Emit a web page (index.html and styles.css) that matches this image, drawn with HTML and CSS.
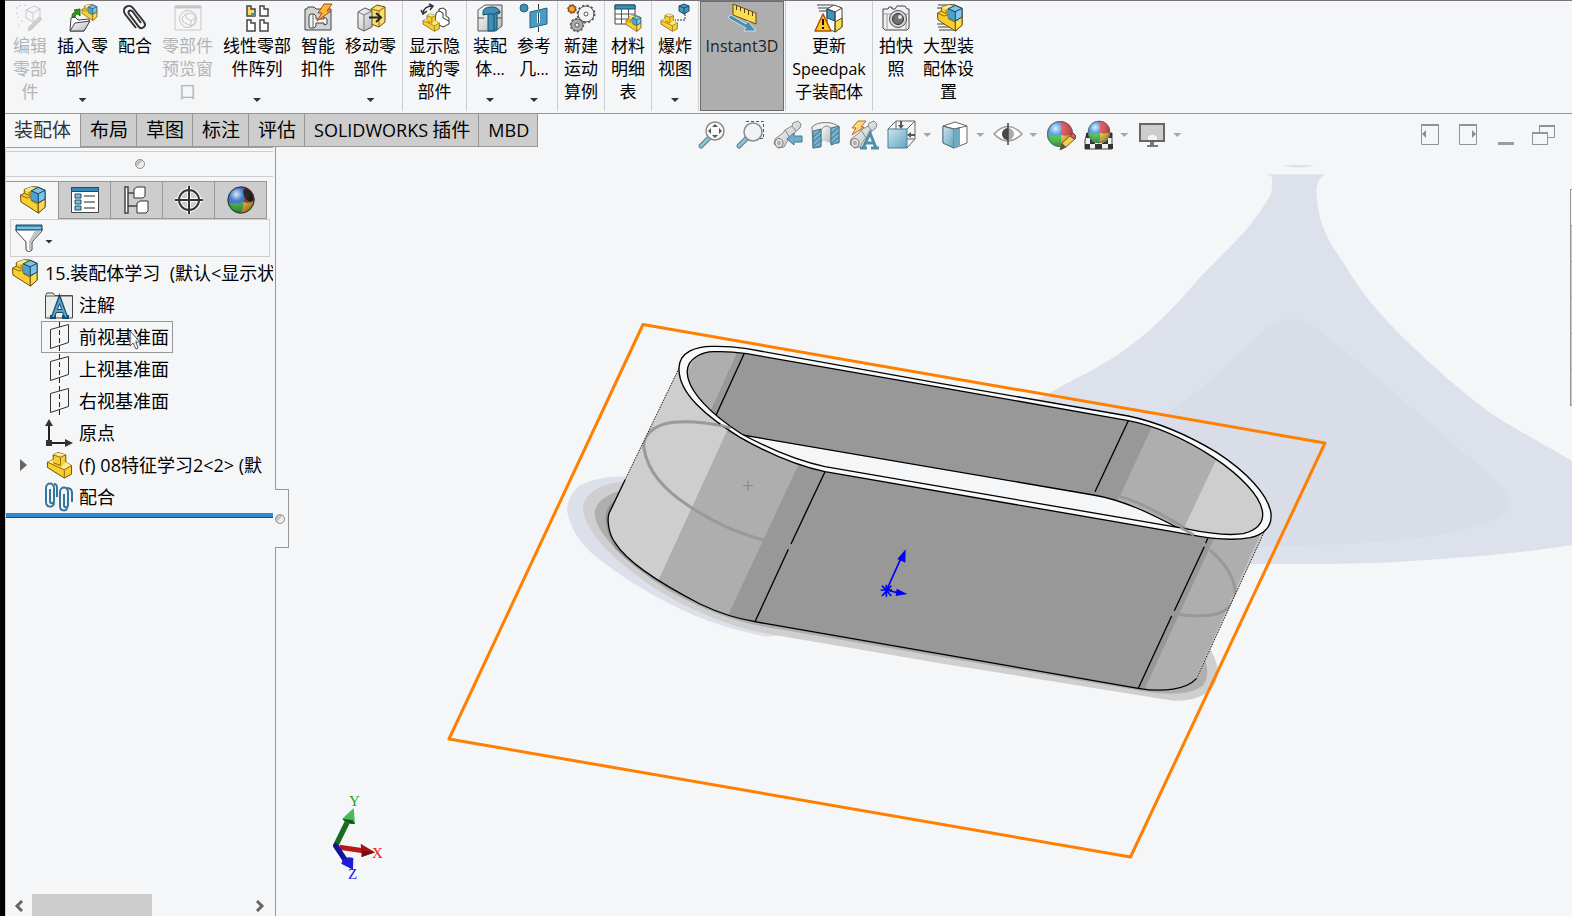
FILE: index.html
```html
<!DOCTYPE html>
<html lang="zh-CN">
<head>
<meta charset="utf-8">
<title>SOLIDWORKS - 15.装配体学习</title>
<link rel="stylesheet" href="styles.css">
</head>
<body>
<svg class="defs" aria-hidden="true">
  <defs>
    <linearGradient id="blueFace" x1="0" y1="0" x2="1" y2="1"><stop offset="0" stop-color="#cfe6f0"/><stop offset="1" stop-color="#5fa3bf"/></linearGradient>
    <linearGradient id="steel" x1="0" y1="0" x2="1" y2="1"><stop offset="0" stop-color="#ffffff"/><stop offset="1" stop-color="#b4b6b8"/></linearGradient>
    <radialGradient id="shine" cx=".32" cy=".28" r=".75"><stop offset="0" stop-color="#fff" stop-opacity=".85"/><stop offset=".35" stop-color="#fff" stop-opacity=".15"/><stop offset="1" stop-color="#000" stop-opacity=".3"/></radialGradient>
    <symbol id="asm" viewBox="0 0 28 29">
      <path d="M1 9.500 5 7.500V3.500L13 .8 19 1 26.500 4.500V22L19.500 28 1.500 16.500z" fill="#f7cf2e" stroke="#6b4a08"/>
      <path d="M5 3.500 13 .8 18 2.500 10 6z" fill="#fbe88a"/><path d="M1 9.500 8 12.500 12 11M5 7.500 10 10V6M12 15 19.500 19V28" fill="none" stroke="#8a6410"/>
      <path d="M19.500 18V28L26.500 22V13z" fill="#fbdc55" stroke="#6b4a08"/>
      <path d="M12 5 19.500 1.500 26.500 4.500V13.500L19.500 17.500 12 14z" fill="#7cc4ea" stroke="#123f5c"/><path d="M12 5 19.500 8V17.500L12 14z" fill="#4e9fcb"/><path d="M12 5 19.500 8 26.500 4.500M19.500 8V17.500" fill="none" stroke="#123f5c"/>
    </symbol>
    <symbol id="part" viewBox="0 0 28 29">
      <path d="M1 11.500 7 9V4L12 1.500 20 4V11.500L26 15V24L18.500 28 1 17z" fill="#f7cf2e" stroke="#6b4a08"/>
      <path d="M7 4 12 1.500 20 4 14.500 6.500zM1 11.500 7 9V14L14.500 17 20 11.500 26 15 18.500 19.500z" fill="#fbea8c"/><path d="M7 4 14.500 6.500 20 4M14.500 6.500V15L7 12M1 11.500 18.500 19.500 26 15M18.500 19.500V28" fill="none" stroke="#8a6410"/>
    </symbol>
    <symbol id="plane" viewBox="0 0 28 32">
      <path d="M5.500 8.500 23.500 3.500V21.500L5.500 27.500z" fill="none" stroke="#333"/><path d="M14.500 1V32" stroke="#222" stroke-dasharray="5 3"/>
    </symbol>
    <symbol id="lens" viewBox="0 0 30 30">
      <path d="M13 17 4 26" stroke="#557c8c" stroke-width="5" stroke-linecap="round"/><path d="M12 18 4 26" stroke="#8fc4da" stroke-width="3" stroke-linecap="round"/>
    </symbol>
    <symbol id="scope" viewBox="0 0 30 30">
      <path d="M2 19 10 13 12 10 19 6 20 3 25 1 28 4 27 8 22 12 20 16 15 20 11 27 5 28 1 24z" fill="url(#steel)" stroke="#8a8a8a"/><ellipse cx="6" cy="23" rx="4" ry="4.500" fill="#e8e8e8" stroke="#777"/><ellipse cx="6" cy="23" rx="2" ry="2.500" fill="#b0b0b0"/><path d="M12 10 17 18M19 6 23 11" stroke="#8a8a8a"/>
    </symbol>
    <symbol id="ball" viewBox="0 0 28 28">
      <circle cx="14" cy="14" r="13" fill="#3f8fe0"/><path d="M14 1A13 13 0 0 1 27 14Q20 17 15 15Q16 7 14 1z" fill="#e04545"/><path d="M1 14Q8 17 15 15Q16 21 14 27A13 13 0 0 1 1 14z" fill="#3fbf45"/><path d="M27 14Q20 17 15 15Q16 21 14 27A13 13 0 0 0 27 14z" fill="#ecc63c"/><circle cx="14" cy="14" r="12.500" fill="url(#shine)" stroke="#5a6670"/>
    </symbol>
  </defs>
</svg>

<div class="app">
  <header class="ribbon">
    <button class="cmd" disabled><svg class="ico" viewBox="0 0 28 28"><g fill="none" stroke="#c9c9c9"><path d="M10 6 18 2 24 5V14L17 18 10 14zM10 6 17 9 24 5M17 9V18"/><path d="M1 3V12L7 18M2 22 6 20M3 2 10 1" stroke-dasharray="2 3"/><path d="M26 15 16 25 12 27 13 23 23 13z" fill="#cfcfcf"/></g></svg><span class="lbl">编辑<br>零部<br>件</span></button>
    <button class="cmd"><svg class="ico" viewBox="0 0 28 28"><use href="#asm" x="12" y="0" width="17" height="17"/><path d="M1 27 2 14 6 13 9 16 20 15 20 18 15 27z" fill="#fff" stroke="#444"/><path d="M1 27 6 19 21 17 15 27z" fill="url(#steel)" stroke="#444"/><path d="M3 13C3 9 5 8 7 8L5 6 11 5V12L9 10C7 10 6 11 6 13z" fill="#2f9a1c" stroke="#1d6b10"/></svg><span class="lbl">插入零<br>部件</span><i class="drop"></i></button>
    <button class="cmd"><svg class="ico" viewBox="0 0 28 28"><path d="M8 10 18 23C21 26 26 22 23 18L12 4C8 -1 0 4 4 10L15 24M8 10C6 7 10 5 12 8L20 19" fill="none" stroke="#333" stroke-width="2"/></svg><span class="lbl">配合</span></button>
    <button class="cmd" disabled><svg class="ico" viewBox="0 0 28 28"><g fill="none" stroke="#c6c6c6"><path d="M1 2H27V26H1z"/><path d="M1 3H27" stroke-width="3"/><circle cx="14" cy="15" r="8.500"/><path d="M8 14 12 10 18 9 21 12V19L17 22 9 18zM12 10V14L17 17 21 14M17 17V22"/></g></svg><span class="lbl">零部件<br>预览窗<br>口</span></button>
    <button class="cmd"><svg class="ico" viewBox="0 0 28 28"><g fill="#fff" stroke="#444" stroke-width="1.500"><path d="M4 2H8V5H12V12H4z" fill="#f9dc62"/><path d="M17 2H21V5H25V12H17zM4 16H8V19H12V27H4zM17 16H21V19H25V27H17z"/></g><path d="M8 9H12V12H8z" fill="#3b93bd"/></svg><span class="lbl">线性零部<br>件阵列</span><i class="drop"></i></button>
    <button class="cmd"><svg class="ico" viewBox="0 0 28 28"><path d="M1 26V5H3L4 3H10L12 5H27V26z" fill="#d2d3d5" stroke="#444"/><path d="M6 10H10L12 12V15H20V13L23 15V20L20 21V19H12V22L10 24H6L5 22V12z" fill="#f4f4f4" stroke="#444"/><path d="M9 10V24" stroke="#666"/><path d="M20 0H28L23 7H27L13 17 18 9H14z" fill="#fbb73b" stroke="#a34b12"/></svg><span class="lbl">智能<br>扣件</span></button>
    <button class="cmd"><svg class="ico" viewBox="0 0 28 28"><path d="M14 5 20 1 28 3V18L22 23 14 20z" fill="#fadf65" stroke="#6b4a08"/><path d="M14 5 22 7 28 3M22 7V23" fill="none" stroke="#8a6410"/><path d="M1 8 8 4 15 7V23L7 27 1 24z" fill="url(#steel)" stroke="#555"/><path d="M1 8 7 11 15 7M7 11V27" fill="none" stroke="#777"/><path d="M12 13.500H22M19 9 24 13.500 19 18" fill="none" stroke="#222" stroke-width="2"/></svg><span class="lbl">移动零<br>部件</span><i class="drop"></i></button>
    <span class="sep"></span>
    <button class="cmd"><svg class="ico" viewBox="0 0 28 28"><path d="M15 9 18 7V5L22 4 25 6V12L28 14V20L22 23 14 19z" fill="#fff" stroke="#333"/><path d="M18 7 22 9V14L28 17" fill="none" stroke="#333"/><use href="#part" x="1" y="9" width="19" height="19"/><path d="M2 9C3 4 7 2 11 2M8 0 12 2 9 6M0 6 2 10 6 7" fill="none" stroke="#333" stroke-width="1.500"/></svg><span class="lbl">显示隐<br>藏的零<br>部件</span></button>
    <span class="sep"></span>
    <button class="cmd"><svg class="ico" viewBox="0 0 28 28"><path d="M2 6 9 1H26V22L20 27H2z" fill="url(#steel)" stroke="#555"/><path d="M2 14H8M20 14H26" stroke="#555"/><path d="M7 8C7 4 12 3 16 3S24 5 24 9L21 10V25L17 27H12V10L7 11z" fill="#3f8eb4" stroke="#174d69"/><path d="M12 10H18V27M18 10 24 7" fill="none" stroke="#174d69"/></svg><span class="lbl">装配<br>体<span class="lat">...</span></span><i class="drop"></i></button>
    <button class="cmd"><svg class="ico" viewBox="0 0 28 28"><circle cx="4" cy="4" r="4" fill="#3f8eb4" stroke="#245f7e"/><path d="M10 8 27 4V20L10 24z" fill="#4a9cc4" stroke="#245f7e"/><path d="M18.500 0V5M18.500 23V28" stroke="#333"/><path d="M18.500 9V19" stroke="#fff" stroke-width="3"/><path d="M18.500 9V19" stroke="#333"/></svg><span class="lbl">参考<br>几<span class="lat">...</span></span><i class="drop"></i></button>
    <span class="sep"></span>
    <button class="cmd"><svg class="ico" viewBox="0 0 28 28"><circle cx="5" cy="5" r="3.500" fill="#f5a83a" stroke="#8a4c0c" stroke-width="1.500"/><circle cx="5" cy="5" r="4.500" fill="none" stroke="#8a4c0c" stroke-dasharray="1.500 2"/><circle cx="19" cy="10" r="8" fill="#f4f4f4" stroke="#555"/><circle cx="19" cy="10" r="8.500" fill="none" stroke="#555" stroke-width="2" stroke-dasharray="2 2.500"/><circle cx="19" cy="10" r="2" fill="#fff" stroke="#555"/><circle cx="10" cy="21" r="6" fill="#a9abad" stroke="#555"/><circle cx="10" cy="21" r="6.500" fill="none" stroke="#666" stroke-width="1.500" stroke-dasharray="2 2"/><circle cx="10" cy="21" r="2" fill="#fff" stroke="#555"/></svg><span class="lbl">新建<br>运动<br>算例</span></button>
    <span class="sep"></span>
    <button class="cmd"><svg class="ico" viewBox="0 0 28 28"><path d="M1 1H21V20H1z" fill="#fff" stroke="#444"/><path d="M1 1H21V5H1z" fill="#3b8fba" stroke="#174d69"/><path d="M1 10H21M1 15H21M7.500 5V20M14.500 5V20" stroke="#555"/><use href="#asm" x="11" y="11" width="17" height="17"/></svg><span class="lbl">材料<br>明细<br>表</span></button>
    <span class="sep"></span>
    <button class="cmd"><svg class="ico" viewBox="0 0 28 28"><use href="#part" x="-1" y="9" width="19" height="19"/><path d="M18 2 23 0 28 2V7L23 10 18 7z" fill="#4597c0" stroke="#174d69"/><path d="M18 2 23 4 28 2M23 4V10" fill="none" stroke="#174d69"/><path d="M24 10V16H14" fill="none" stroke="#333" stroke-dasharray="2 1"/></svg><span class="lbl">爆炸<br>视图</span><i class="drop"></i></button>
    <span class="sep"></span>
    <button class="cmd wide on" aria-pressed="true"><svg class="ico" viewBox="0 0 28 28"><path d="M5 0 28 9V20L5 11z" fill="#f9dd50" stroke="#6b4a08"/><path d="M8.500 1V6M12.500 3V7M16.500 5V9M20.500 6V11M24.500 8V12" stroke="#5a430a"/><path d="M0 13 3 11 18 20 20 17 28 27 16 27 18 24 2 15z" fill="#4b8fae" stroke="#d9edf5" stroke-width=".8"/></svg><span class="lbl"><span class="lat">Instant3D</span></span></button>
    <span class="sep"></span>
    <button class="cmd wide"><svg class="ico" viewBox="0 0 28 28"><path d="M2 1H18M3 4H14M4 7H12" stroke="#444"/><path d="M12 5 19 1 27 4V23L20 28 12 24z" fill="#fff" stroke="#444"/><path d="M12 5 20 8V17L12 14z" fill="#3f94bf" stroke="#174d69"/><path d="M20 18 27 14V23L20 28z" fill="#f9dd50" stroke="#6b4a08"/><path d="M12 5 20 8 27 4M20 8V28" fill="none" stroke="#444"/><path d="M8 10 16 27H0z" fill="#fcc822" stroke="#b0500c" stroke-width="1.500" stroke-linejoin="round"/><path d="M8 15V21M8 23V25" stroke="#111" stroke-width="2"/></svg><span class="lbl">更新<br><span class="lat">Speedpak</span><br>子装配体</span></button>
    <span class="sep"></span>
    <button class="cmd"><svg class="ico" viewBox="0 0 28 28"><path d="M1 5H6L7 3H10V5H13L15 2H23L25 5H27V24L25 26H3L1 24z" fill="#f0f1f2" stroke="#444"/><path d="M1 10H27M5 10V26M24 10V26" stroke="#999"/><circle cx="16" cy="15" r="8.500" fill="#d5d6d8" stroke="#555"/><circle cx="16" cy="15" r="5.500" fill="#6e7275" stroke="#333"/><circle cx="18" cy="13" r="2" fill="#e6e6e6"/></svg><span class="lbl">拍快<br>照</span></button>
    <button class="cmd"><svg class="ico" viewBox="0 0 28 28"><path d="M3 1H20M2 4H14M2 20H14M3 23H16M4 26H20" stroke="#444"/><use href="#asm" x="1" y="0" width="28" height="28"/></svg><span class="lbl">大型装<br>配体设<br>置</span></button>
  </header>

  <div class="strip">
    <nav class="tabs">
      <button class="tab on">装配体</button><button class="tab">布局</button><button class="tab">草图</button><button class="tab">标注</button><button class="tab">评估</button><button class="tab"><span class="lat">SOLIDWORKS</span> 插件</button><button class="tab"><span class="lat">MBD</span></button>
    </nav>
    <div class="hud">
      <button class="view" aria-label="整屏显示全图"><svg viewBox="0 0 30 30"><use href="#lens"/><circle cx="18" cy="11" r="9" fill="#f8fafc" stroke="#8b8b8b" stroke-width="1.500"/><path d="M18 4 21 7H15zM18 18 15 15H21zM11 11 14 8V14zM25 11 22 14V8z" fill="#555"/></svg></button>
      <button class="view" aria-label="局部放大"><svg viewBox="0 0 30 30"><path d="M11 1.500H28.500V18.500H24" fill="none" stroke="#555" stroke-dasharray="3 2"/><use href="#lens"/><circle cx="18" cy="12" r="9" fill="#eff3f9" stroke="#8b8b8b" stroke-width="1.500"/></svg></button>
      <button class="view" aria-label="上一视图"><svg viewBox="0 0 30 30"><use href="#scope"/><path d="M14 19 21 13V16H29V22H21V25z" fill="#6daccb" stroke="#3f7d9b"/></svg></button>
      <button class="view" aria-label="剖面视图"><svg viewBox="0 0 30 30"><path d="M1 7C6 1 23 1 28 7V23H20V20H10V27L2 28z" fill="#eeefef" stroke="#777"/><path d="M10 20V10Q15 3 20 8V23" fill="url(#steel)" stroke="#888"/><path d="M2 11 10 9V26L2 28zM20 8 28 6V22L20 25z" fill="#76b1ce" stroke="#44778f"/><path d="M2 17 10 10M2 22 10 15M3 26 10 20M20 14 28 7M20 19 28 12M20 24 28 17" stroke="#3c708a"/></svg></button>
      <button class="view" aria-label="动态注解视图"><svg viewBox="0 0 30 30"><use href="#scope"/><path d="M9 1H17L12 7H15L3 15 7 8H3z" fill="#fbd878" stroke="#c0652a"/><path d="M11 28H18M22 28H30M14 28 21 13 27 28M16 23H25" fill="none" stroke="#4f8fab" stroke-width="3"/></svg></button>
      <button class="view" aria-label="视图定向"><svg viewBox="0 0 30 30"><path d="M1 9 9 1H28V19L20 28M9 1V9M20 9 28 1M20 19H28" fill="none" stroke="#666"/><path d="M1 9H20V28H1z" fill="url(#blueFace)" stroke="#4a7d95"/><path d="M14 1V6M28 15H24" stroke="#555" stroke-width="2"/><path d="M11 5H17L14 9zM24 12V18L20 15z" fill="#555"/></svg></button>
      <button class="more" aria-label="视图定向选项"><i class="drop"></i></button>
      <button class="view" aria-label="显示样式"><svg viewBox="0 0 30 30"><path d="M3 6 15 2 27 6V23L14 28 3 23z" fill="#fff" stroke="#666"/><path d="M3 6 14 9V28L3 23z" fill="url(#blueFace)" stroke="#44788f"/><path d="M14 9 20 7V25L14 28z" fill="#6fa9c2"/><path d="M3 6 14 9 27 6" fill="none" stroke="#666"/></svg></button>
      <button class="more" aria-label="显示样式选项"><i class="drop"></i></button>
      <button class="view" aria-label="隐藏/显示项目"><svg viewBox="0 0 30 30"><path d="M1 14Q15 -1 29 14Q15 28 1 14z" fill="#fff" stroke="#999" stroke-width="1.500"/><circle cx="15" cy="14" r="6" fill="#aaa"/><path d="M15 8A6 6 0 0 0 15 20z" fill="#4a4a4a"/><path d="M15 3V25" stroke="#444" stroke-width="1.500"/></svg></button>
      <button class="more" aria-label="隐藏/显示选项"><i class="drop"></i></button>
      <button class="view" aria-label="编辑外观"><svg viewBox="0 0 30 30"><use href="#ball" width="28" height="28"/><path d="M14 30 16 23 26 14 30 18 20 27z" fill="#f2cf4c" stroke="#76581c"/><path d="M14 30 16 23 20 27z" fill="#555"/><path d="M24 16 27 13 30 16 28 19z" fill="#d95a62" stroke="#7d3a3e"/></svg></button>
      <button class="view" aria-label="应用布景"><svg viewBox="0 0 30 30"><path d="M3 13H28V29H1V20z" fill="#efefef" stroke="#444"/><path d="M2 13H8V18H2zM22 13H28V18H22zM1 24H6V29H1zM11 24H18V29H11zM24 24H29V29H24zM6 18H11V24H6zM18 18H24V24H18z" fill="#333"/><use href="#ball" x="3" width="24" height="24"/></svg></button>
      <button class="more" aria-label="应用布景选项"><i class="drop"></i></button>
      <button class="view" aria-label="视图设定"><svg viewBox="0 0 30 30"><path d="M3 4H27V21H3z" fill="#cdcdcd" stroke="#666" stroke-width="2"/><path d="M11 20V17Q15 12 20 17V20z" fill="#f4f4f4"/><path d="M13 22H17V25H21V27H10V25H13z" fill="#777"/></svg></button>
      <button class="more" aria-label="视图设定选项"><i class="drop"></i></button>
    </div>
    <div class="win">
      <button aria-label="向左展开"><svg viewBox="0 0 24 24"><path d="M3.500 2.500H20.500V22.500H3.500z" fill="none" stroke="#909498"/><path d="M3 3H21" stroke="#909498" stroke-width="2"/><path d="M4 12 8 8V16z" fill="#8b8f93"/></svg></button>
      <button aria-label="向右展开"><svg viewBox="0 0 24 24"><path d="M3.500 2.500H20.500V22.500H3.500z" fill="none" stroke="#909498"/><path d="M3 3H21" stroke="#909498" stroke-width="2"/><path d="M20 12 16 8V16z" fill="#8b8f93"/></svg></button>
      <button aria-label="最小化"><svg viewBox="0 0 24 24"><path d="M4 21.500H20" stroke="#999ba0" stroke-width="3"/></svg></button>
      <button aria-label="还原"><svg viewBox="0 0 24 24"><path d="M7.500 10V3.500H22.500V15.500H16M.5 10.500H15.500V22.500H.5z" fill="none" stroke="#909498"/><path d="M7 4H23M0 11H16" stroke="#909498" stroke-width="2"/></svg></button>
    </div>
  </div>

  <main class="work">
    <aside class="panel">
      <div class="grip"><span class="dot"></span></div>
      <nav class="ptabs">
        <button class="ptab on" aria-label="特征树"><svg viewBox="0 0 28 28"><use href="#asm"/></svg></button>
        <button class="ptab" aria-label="属性"><svg viewBox="0 0 28 28"><path d="M.5 1.500H27.500V26.500H.5z" fill="#fff" stroke="#444"/><path d="M.5 1.500H27.500V5.500H.5z" fill="#3786b5" stroke="#1b4d6b"/><path d="M4 8H10V12H4zM4 14H10V18H4zM4 20H10V24H4z" fill="#7fc0dd" stroke="#174d69"/><path d="M13 10H24M13 16H24M13 22H24" stroke="#222"/></svg></button>
        <button class="ptab" aria-label="配置"><svg viewBox="0 0 28 28"><path d="M2 1H5V27H2zM5 7H12M5 20H15" fill="#fff" stroke="#444" stroke-width="1.500"/><path d="M11 3 14 1H22V10L20 12H11zM14 17 17 15H25V25L23 27H14z" fill="#fff" stroke="#333"/></svg></button>
        <button class="ptab" aria-label="尺寸"><svg viewBox="0 0 28 28"><path d="M14 0V28M0 14H28" stroke="#fff" stroke-width="4"/><circle cx="14" cy="14" r="10" fill="none" stroke="#fff" stroke-width="4"/><circle cx="14" cy="14" r="10" fill="none" stroke="#333" stroke-width="2"/><path d="M14 0V28M0 14H28" stroke="#333" stroke-width="2"/></svg></button>
        <button class="ptab" aria-label="外观"><svg viewBox="0 0 28 28"><circle cx="14" cy="14" r="13.500" fill="#2465bd"/><path d="M15 .5A13.500 13.500 0 0 1 27.500 14Q22 18 17 16Q18 8 15 .5z" fill="#951a18"/><path d="M1 16Q8 19 16 16Q17 22 13 27.500A13 13 0 0 1 1 16z" fill="#31a334"/><path d="M27 15Q21 18 16 16Q17 22 13 27.500A13.500 13.500 0 0 0 27 15z" fill="#e3aa1d"/><ellipse cx="21" cy="9" rx="4" ry="7" transform="rotate(-28 21 9)" fill="#080808"/><circle cx="14" cy="14" r="13" fill="url(#shine)" stroke="#333"/></svg></button>
      </nav>
      <button class="filter" aria-label="过滤器"><svg viewBox="0 0 28 28"><path d="M1 5H27V7L17 18V26L14 28 11 26V18L1 7z" fill="#fdfdfd" stroke="#444"/><path d="M20 7H26L16 18V26H14V17z" fill="#bfc1c3"/><path d="M1 1H27V6H1z" fill="#3b8fba" stroke="#174d69"/><path d="M2 4H26" stroke="#7cc0e2" stroke-width="2"/></svg><i class="drop"></i></button>
      <ul class="tree">
        <li class="root"><svg class="ti" viewBox="0 0 28 29"><use href="#asm"/></svg><span><span class="lat">15.</span>装配体学习<span class="lat">&nbsp;&nbsp;(</span>默认<span class="lat">&lt;</span>显示状</span></li>
        <li><svg class="ti" viewBox="0 0 28 28"><path d="M.5 27V4.500L2 2H8L10 4.500H27.500V27z" fill="#eceded" stroke="#444"/><path d="M.5 5H27" stroke="#555"/><path d="M5 26H11M17 26H24M8 26 14.500 8 21 26M10 20H18" fill="none" stroke="#174d69" stroke-width="4"/><path d="M8 26 14.500 9 21 26M10 20H18" fill="none" stroke="#58a4cc" stroke-width="2"/></svg><span>注解</span></li>
        <li class="sel"><svg class="ti tall" viewBox="0 0 28 32"><use href="#plane"/></svg><span>前视基准面</span><svg class="cursor" viewBox="0 0 12 20"><path d="M1 1V16L4 13 7 19 9 18 7 12H11z" fill="#fff" fill-opacity=".8" stroke="#555"/></svg></li>
        <li><svg class="ti tall" viewBox="0 0 28 32"><use href="#plane"/></svg><span>上视基准面</span></li>
        <li><svg class="ti tall" viewBox="0 0 28 32"><use href="#plane"/></svg><span>右视基准面</span></li>
        <li><svg class="ti" viewBox="0 0 28 28"><path d="M4 5V24H20" fill="none" stroke="#222" stroke-width="2"/><path d="M4 0 8 7H0zM28 24 20 28V20z" fill="#333"/><path d="M1 21H7V27H1z" fill="#333"/></svg><span>原点</span></li>
        <li><i class="twist"></i><svg class="ti" viewBox="0 0 28 29"><use href="#part" x="1"/></svg><span><span class="lat">(f) 08</span>特征学习<span class="lat">2&lt;2&gt; (</span>默</span></li>
        <li><svg class="ti" viewBox="0 0 28 28"><g fill="none" stroke="#35779b" stroke-width="2"><path d="M5 6V18C5 21 9 21 9 18V5C9 -1 1 -1 1 5V19C1 25 9 25 9 20"/><path d="M19 11V22C19 25 23 25 23 22V9C23 3 15 3 15 9V23C15 29 22 28 22 25M12 14V5C12 2 11 1 9 1M27 19V10C27 6 25 5 22 5"/></g></svg><span>配合</span></li>
      </ul>
      <div class="rollback"></div>
      <div class="hscroll"><button aria-label="向左滚动"><svg viewBox="0 0 10 12"><path d="M8 1 3 6 8 11" fill="none" stroke="#666" stroke-width="3"/></svg></button><span class="track"><span class="thumb"></span></span><button aria-label="向右滚动"><svg viewBox="0 0 10 12"><path d="M2 1 7 6 2 11" fill="none" stroke="#666" stroke-width="3"/></svg></button></div>
      <button class="splitter" aria-label="折叠面板"><span class="dot"></span></button>
    </aside>

    <section class="stage">
      <svg class="scene" viewBox="276 147 1296 769" preserveAspectRatio="xMinYMin meet">
        <g transform="translate(1200 110) scale(.33333)">
          <path d="M248 165H342Q318 173 294 173T248 165z" fill="#dde1ec"/>
          <path d="M202 193H375Q352 208 349 240C352 290 358 330 375 365C400 420 430 455 450 490C490 555 550 630 670 740C740 805 850 900 920 940L1116 1052V1305C950 1330 850 1340 600 1355Q500 1362 160 1362H-400L-489 870-381 810C-200 725-100 620 0 502L130 370Q180 310 212 255Q219 230 215 200z" fill="#dde1ec"/>
          <path d="M275 627Q230 625 185 668L0 838Q-80 900-130 930L-160 1309H190Q420 1309 650 1285Q930 1245 930 1180Q920 1130 830 1060L480 760 350 655Q310 627 275 627z" fill="#d9dde8"/>
        </g>
        <g transform="translate(560 320) scale(.33333)" stroke-linejoin="round">
          <path d="M200 470Q125 465 60 495Q10 540 25 590Q45 660 110 712Q240 815 400 885Q500 927 620 950L1000 900 400 600z" fill="#dce0eb"/>
          <path d="M190 486C110 490 65 530 70 570C75 640 170 730 300 815C420 885 530 927 640 944L1140 1030 1840 1142C1900 1144 1940 1125 1960 1100C1980 1060 1980 1045 1950 985L1700 900 400 600z" fill="#cfcfd0"/>
          <path d="M180 512C120 530 100 560 105 590C120 660 220 740 320 808C430 873 540 910 640 925L1140 1010 1740 1112C1840 1130 1900 1120 1930 1095C1946 1070 1944 1050 1935 1015L1700 900 400 600z" fill="#afafb0"/>
          <path d="M160 545C125 570 130 620 165 685C245 770 400 860 585 908L1735 1108 1900 1085 1700 900 400 600z" fill="#949596"/>
          <clipPath id="outerWall"><path d="M357 145 147 580C141 600 145 640 165 668C200 725 300 790 420 852Q505 892 585 905L1735 1105C1810 1118 1880 1108 1910 1075L2115 630 1940 400 500 100z"/></clipPath>
          <g clip-path="url(#outerWall)">
            <path d="M100 0H2200V1200H100z" fill="#989898"/>
            <path d="M100 0H655L200 990H0z" fill="#cecece"/>
            <path d="M500 335 715 435 507 880 460 980 206 980z" fill="#aeaeae"/>
            <path d="M1960 660 1755 1105V1160H2200V500z" fill="#aeaeae"/>
            <path d="M2103 640 1905 1080 2200 1000V600z" fill="#cbcbcb"/>
            <path d="M505 321C430 305 385 302 340 307C280 315 247 345 252 385C262 450 310 510 390 560C460 605 520 635 610 660M1950 690C1990 725 2025 770 2026 820C2020 870 1980 890 1910 887Q1870 888 1855 881" fill="none" stroke="#999" stroke-width="9"/>
          </g>
          <path d="M357 145 195 480M2115 630 1910 1075" fill="none" stroke="#111" stroke-width="3" stroke-dasharray="4 4"/>
          <path d="M195 480 147 580C141 600 145 640 165 668C200 725 300 790 420 852Q505 892 585 905L1735 1105C1810 1118 1880 1108 1910 1075" fill="none" stroke="#000" stroke-width="4"/>
          <path d="M795 455 693 672M685 688 585 905M1943 655 1937 670M1933 680 1843 872M1835 888 1735 1105" stroke="#000" stroke-width="4"/>
          <path d="M357 145C358 95 410 78 460 79Q510 78 560 86L1140 190 1705 288C1800 308 1900 355 1970 397C2060 455 2125 525 2133 580C2137 625 2105 645 2070 653Q2000 666 1885 643L795 455C700 435 610 392 540 352C440 290 355 220 357 145z" fill="#f8f9fa" stroke="#000" stroke-width="4"/>
          <clipPath id="innerRim"><path d="M382 160C378 115 430 92 470 95Q510 94 560 101L1140 202 1705 302C1790 318 1880 360 1960 412C2040 465 2105 530 2108 580C2110 615 2085 632 2050 641Q1990 650 1875 626L795 440C700 420 610 377 545 342C455 285 385 215 382 160z"/></clipPath>
          <g clip-path="url(#innerRim)">
            <path d="M350 50H2200V700H350z" fill="#989898"/>
            <path d="M350 50H553L430 320H350z" fill="#aeaeae"/><path d="M350 50H430L382 160H350z" fill="#cecece"/>
            <path d="M1790 290 1660 570 1850 670 2010 330z" fill="#aeaeae"/><path d="M2010 330 1850 670H2200V330z" fill="#cecece"/>
            <path d="M500 338 1600 525C1690 540 1770 580 1860 627L1850 700 500 500z" fill="#f5f6f8"/>
            <path d="M1680 530C1740 545 1820 590 1900 640" fill="none" stroke="#999" stroke-width="9"/>
            <path d="M530 342 1600 525C1690 540 1770 580 1860 627M553 100 467 288M1705 302 1605 515" fill="none" stroke="#000" stroke-width="4"/>
          </g>
          <path d="M382 160C378 115 430 92 470 95Q510 94 560 101L1140 202 1705 302C1790 318 1880 360 1960 412C2040 465 2105 530 2108 580C2110 615 2085 632 2050 641Q1990 650 1875 626L795 440C700 420 610 377 545 342C455 285 385 215 382 160z" fill="none" stroke="#000" stroke-width="4"/>
          <path d="M480 315 512 324M1860 622 1902 645" stroke="#999" stroke-width="8"/>
          <path d="M549 497H579M564 482V512" stroke="#8b8b8b" stroke-width="4"/>
          <path d="M980 810 1025 710M980 810 1020 820M962 810H996M979 794V830M966 797 994 828M994 797 966 828" stroke="#00f" stroke-width="5"/><path d="M1037 688 1036 728 1012 717zM1042 822 1007 828 1010 806z" fill="#00f"/>
        </g>
        <path d="M643 324.500 1325 443 1130.500 857 449 739z" fill="none" stroke="#ff8000" stroke-width="3" stroke-linejoin="round"/>
        <g transform="translate(300 780) scale(.33333)">
          <path d="M108 195 145 120" stroke="#1b6b1e" stroke-width="16"/><path d="M161 84 127 116Q135 133 165 132z" fill="#4bb95a"/><path d="M127 116Q140 133 165 132L158 121z" fill="#16571a"/>
          <path d="M118 202 190 212" stroke="#bb1717" stroke-width="15"/><path d="M225 217 182 191 186 231z" fill="#9d1515"/><path d="M225 217 186 212 184 231z" fill="#701010"/>
          <path d="M107 197 137 242" stroke="#14149a" stroke-width="16" stroke-linecap="round"/><path d="M159 269 124 251Q130 226 160 234z" fill="#1c1cd8"/>
        </g>
        <g class="axis"><text x="349" y="806" fill="#18a018">Y</text><text x="372" y="858" fill="#f01414">X</text><text x="348" y="879" fill="#2020f0">Z</text></g>
      </svg>
      <div class="taskpane"><i></i><i></i><i></i><i></i><i></i><i></i></div>
    </section>
  </main>
</div>
</body>
</html>
```

FILE: styles.css
```css
* { box-sizing: border-box; }
body { margin: 0; background: #f5f6f8; color: #000; font-family: "Noto Sans CJK SC", "Open Sans", sans-serif; }
button { margin: 0; padding: 0; border: 0; background: none; color: inherit; font: inherit; }
svg { display: block; }
.defs { position: absolute; width: 0; height: 0; }
.lat { font-family: "Open Sans", "Noto Sans CJK SC", sans-serif; line-height: 1; }
.app { display: flex; flex-direction: column; height: 100vh; overflow: hidden; border-left: 5px solid #000; }

.drop { display: block; width: 8px; height: 4px; background: #333; clip-path: polygon(0 0, 100% 0, 50% 100%); }

.ribbon { display: flex; flex: none; height: 114px; padding: 0 0 2px 3px; border-top: 1px solid #77757b; border-bottom: 1px solid #929699; }
.cmd { display: flex; flex: none; flex-direction: column; align-items: center; padding: 3px 5px 9px; font-size: 17px; line-height: 23px; white-space: nowrap; }
.cmd:disabled { color: #b4b4b4; }
.cmd .ico { flex: none; width: 28px; height: 28px; margin-bottom: 1px; overflow: visible; }
.cmd .drop { margin-top: auto; }
.cmd .lat { font-size: 16px; }
.cmd.wide { width: 84px; }
.cmd.on { border: 1px solid #6c6c6c; background: #aeaeae; padding-top: 2px; color: #222; }
.sep { flex: none; width: 1px; margin: 0 1px; background: #cbccce; }

.strip { display: flex; flex: none; height: 33px; }
.tabs { display: flex; flex: none; }
.tab { padding: 0 8px 2px 9px; border-left: 1px solid #979797; border-bottom: 1px solid #979797; background: #cdcdcd; font-size: 19px; line-height: 30px; white-space: nowrap; }
.tab:last-child { border-right: 1px solid #979797; }
.tab.on { padding-left: 8px; padding-right: 9px; border-color: transparent; background: none; color: #333; }
.tab .lat { font-size: 18px; }
.hud { display: flex; flex: none; align-items: center; gap: 8px; height: 30px; margin: 6px 0 0 159px; z-index: 1; }
.view svg { width: 30px; height: 30px; }
.more { width: 15px; height: 20px; margin-left: -8px; padding-left: 6px; }
.more .drop { background: #a3a5a8; }
.win { display: flex; gap: 14px; margin: 7px 16px 0 auto; z-index: 1; }
.win svg { width: 24px; height: 24px; }

.work { display: flex; flex: 1; min-height: 0; }
.panel { position: relative; display: flex; flex: none; flex-direction: column; width: 271px; border-left: 1px solid #d0d0d0; border-right: 1px solid #979797; }
.grip { display: flex; align-items: center; justify-content: center; height: 30px; margin: 0 2px 4px 0; border-top: 1px solid #93a3a3; border-bottom: 1px solid #cdcdcd; box-shadow: inset 0 3px #f5f6f8, inset 0 4px #cdcdcd; padding-top: 4px; }
.dot { width: 10px; height: 10px; border: 1px solid #8f8f8f; border-radius: 50%; background: linear-gradient(135deg, #c4c4c4 50%, #eee 50%); }
.ptabs { display: flex; margin: 0 8px 0 0; border-top: 1px solid #979797; border-right: 1px solid #979797; }
.ptab { display: flex; flex: 1; align-items: center; justify-content: center; height: 37px; border-left: 1px solid #979797; border-bottom: 1px solid #979797; background: #cdcdcd; }
.ptab.on { border-color: transparent; background: #f5f6f8; }
.ptab svg { width: 28px; height: 28px; }
.filter { display: flex; align-items: center; gap: 2px; height: 38px; margin: 0 5px 0 4px; padding-left: 4px; border: 1px solid #cdcdcd; }
.filter svg { width: 28px; height: 28px; }
.filter .drop { margin-top: 7px; }
.tree { margin: 0 2px 0 0; padding: 0; list-style: none; font-size: 18px; line-height: 28px; white-space: nowrap; overflow: hidden; }
.tree li { position: relative; display: flex; align-items: center; gap: 6px; width: max-content; height: 32px; margin-left: 35px; padding: 0 3px; border: 1px solid transparent; }
.tree li > span { padding-bottom: 2px; }
.tree .root { margin-left: 1px; }
.tree .sel { border-color: #979797; }
.ti { width: 28px; height: 28px; overflow: visible; }
.ti.tall { height: 32px; }
.cursor { position: absolute; left: 87px; top: 8px; width: 12px; height: 20px; }
.twist { position: absolute; left: -22px; top: 9px; width: 7px; height: 12px; background: #666; clip-path: polygon(0 0, 100% 50%, 0 100%); }
.rollback { height: 5px; margin-right: 2px; background: #3389cc; border-bottom: 1px solid #15439b; }
.hscroll { display: flex; height: 22px; margin: auto 2px 0 0; }
.hscroll button { display: flex; align-items: center; justify-content: center; width: 26px; padding-top: 2px; }
.hscroll svg { width: 10px; height: 12px; }
.track { flex: 1; }
.thumb { display: block; width: 56%; height: 100%; background: #cdcdcd; }
.splitter { position: absolute; top: 342px; right: -14px; display: flex; align-items: center; width: 14px; height: 59px; border: 1px solid #979797; border-left: 0; background: #f5f6f8; z-index: 1; }

.stage { position: relative; flex: 1; min-width: 0; }
.scene { position: absolute; inset: 0; width: 100%; height: 100%; }
.axis { font: 15px "Liberation Serif", serif; }
.taskpane { position: absolute; top: 42px; right: 0; width: 2px; border-bottom: 1px solid #979797; }
.taskpane i { display: block; height: 36px; border-top: 1px solid #979797; border-left: 1px solid #979797; background: #cdcdcd; }
.taskpane i:first-child { background: #f5f6f8; }
```
